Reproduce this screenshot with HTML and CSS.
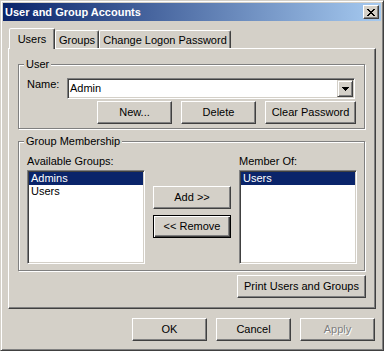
FILE: index.html
```html
<!DOCTYPE html>
<html>
<head>
<meta charset="utf-8">
<link rel="stylesheet" href="styles.css">
</head>
<body>
<div class="window">
  <div class="titlebar">
    <span class="title">User and Group Accounts</span>
    <span class="close">
      <svg width="8" height="7" viewBox="0 0 8 7" shape-rendering="crispEdges">
        <path d="M0 0h2v1h-2z M6 0h2v1h-2z M1 1h2v1h-2z M5 1h2v1h-2z M2 2h4v1h-4z M3 3h2v1h-2z M2 4h4v1h-4z M1 5h2v1h-2z M5 5h2v1h-2z M0 6h2v1h-2z M6 6h2v1h-2z" fill="#000"/>
      </svg>
    </span>
  </div>
  <div class="tabs">
    <div class="tab tab-users active">Users</div>
    <div class="tab tab-groups">Groups</div>
    <div class="tab tab-pass">Change Logon Password</div>
  </div>
  <div class="panel">
    <div class="group user-group">
      <span class="legend">User</span>
      <div class="name-row">
        <span class="name-label">Name:</span>
        <div class="combo">
          <span class="combo-text">Admin</span>
          <span class="drop">
            <svg width="7" height="4" viewBox="0 0 7 4" shape-rendering="crispEdges"><path d="M0 0h7v1h-7z M1 1h5v1h-5z M2 2h3v1h-3z M3 3h1v1h-1z" fill="#000"/></svg>
          </span>
        </div>
      </div>
      <div class="user-buttons">
        <button class="btn">New...</button>
        <button class="btn">Delete</button>
        <button class="btn btn-wide">Clear Password</button>
      </div>
    </div>
    <div class="group members">
      <span class="legend">Group Membership</span>
      <div class="members-grid">
        <span class="col-label avail-label">Available Groups:</span>
        <span class="col-label member-label">Member Of:</span>
        <div class="list avail-list">
          <div class="item sel">Admins</div>
          <div class="item">Users</div>
        </div>
        <div class="move-buttons">
          <button class="btn btn-move">Add &gt;&gt;</button>
          <button class="btn btn-move btn-default">&lt;&lt; Remove</button>
        </div>
        <div class="list member-list">
          <div class="item sel">Users</div>
        </div>
      </div>
    </div>
    <div class="print-row">
      <button class="btn btn-print">Print Users and Groups</button>
    </div>
  </div>
  <div class="footer">
    <button class="btn">OK</button>
    <button class="btn">Cancel</button>
    <button class="btn btn-disabled" disabled>Apply</button>
  </div>
</div>
</body>
</html>
```
FILE: styles.css
```css
* { box-sizing: border-box; }
html, body { margin: 0; padding: 0; }
body {
  background: #d4d0c8;
  font-family: "Liberation Sans", Arial, sans-serif;
  font-size: 11px;
  line-height: 13px;
  color: #000;
}
.window {
  width: 384px;
  height: 351px;
  border: 1px solid;
  border-color: #d4d0c8 #404040 #404040 #d4d0c8;
  box-shadow: inset 1px 1px #fff, inset -1px -1px #808080;
  padding: 2px;
  display: flex;
  flex-direction: column;
}
.titlebar {
  height: 18px;
  flex: none;
  background: linear-gradient(to right, #0a246a, #a6caf0);
  display: flex;
  align-items: center;
  justify-content: space-between;
  padding: 0 2px;
}
.title {
  color: #fff;
  font-weight: bold;
  line-height: 18px;
}
.close {
  width: 16px;
  height: 14px;
  background: #d4d0c8;
  border: 1px solid;
  border-color: #fff #404040 #404040 #fff;
  box-shadow: inset -1px -1px #808080;
  display: flex;
  align-items: center;
  justify-content: center;
}
.close svg { display: block; }

.tabs {
  display: flex;
  align-items: flex-end;
  height: 20px;
  flex: none;
  margin-top: 7px;
  padding-left: 6px;
}
.tab {
  height: 18px;
  border: 1px solid;
  border-bottom: none;
  border-color: #fff #404040 transparent #fff;
  box-shadow: inset -1px 0 #808080;
  border-radius: 2px 2px 0 0;
  padding-top: 3px;
  text-align: center;
  white-space: nowrap;
}
.tab.active {
  height: 21px;
  margin-bottom: -1px;
  padding-top: 4px;
  position: relative;
  z-index: 1;
  background: #d4d0c8;
}
.tab-users { width: 46px; }
.tab-groups { width: 44px; }
.tab-pass { width: 132px; }

.panel {
  margin: 0 5px;
  height: 261px;
  flex: none;
  border: 1px solid;
  border-color: #fff #404040 #404040 #fff;
  box-shadow: inset -1px -1px #808080;
  padding: 15px 9px 0 9px;
}
.group {
  position: relative;
  width: 347px;
  border: 1px solid #808080;
  box-shadow: 1px 1px #fff, inset 1px 1px #fff;
}
.legend {
  position: absolute;
  top: -7px;
  left: 5px;
  padding: 0 2px;
  background: #d4d0c8;
  white-space: nowrap;
}
.user-group {
  height: 65px;
  padding: 13px 0 0 8px;
}
.name-row {
  display: flex;
  align-items: flex-start;
}
.name-label { width: 40px; }
.combo {
  width: 288px;
  height: 21px;
  background: #fff;
  border: 1px solid;
  border-color: #808080 #fff #fff #808080;
  box-shadow: inset 1px 1px #404040, inset -1px -1px #d4d0c8;
  padding: 1px;
  display: flex;
  align-items: center;
}
.combo-text {
  flex: 1;
  padding-left: 1px;
}
.drop {
  width: 16px;
  height: 17px;
  background: #d4d0c8;
  border: 1px solid;
  border-color: #d4d0c8 #404040 #404040 #d4d0c8;
  box-shadow: inset 1px 1px #fff, inset -1px -1px #808080;
  display: flex;
  align-items: center;
  justify-content: center;
}
.drop svg { display: block; }
.user-buttons {
  display: flex;
  gap: 9px;
  margin-top: 2px;
  padding-left: 70px;
}

.btn {
  -webkit-appearance: none;
  appearance: none;
  font: inherit;
  color: #000;
  width: 75px;
  height: 23px;
  margin: 0;
  padding: 0;
  background: #d4d0c8;
  border: 1px solid;
  border-color: #fff #404040 #404040 #fff;
  box-shadow: inset -1px -1px #808080;
  white-space: nowrap;
}
.btn-wide { width: 91px; }
.btn-move { width: 78px; }
.btn-default {
  border-color: #000;
  box-shadow: inset 1px 1px #fff, inset -1px -1px #404040, inset -2px -2px #808080;
}
.btn-print { width: 129px; }
.btn-disabled {
  color: #808080;
  text-shadow: 1px 1px #fff;
}

.members {
  margin-top: 12px;
  height: 130px;
  padding: 13px 0 0 8px;
}
.members-grid {
  display: grid;
  grid-template-columns: 118px 78px 118px;
  grid-template-rows: 13px 94px;
  column-gap: 8px;
  row-gap: 2px;
}
.avail-label { grid-column: 1; grid-row: 1; white-space: nowrap; }
.member-label { grid-column: 3; grid-row: 1; white-space: nowrap; }
.avail-list { grid-column: 1; grid-row: 2; }
.move-buttons { grid-column: 2; grid-row: 2; }
.member-list { grid-column: 3; grid-row: 2; }
.list {
  background: #fff;
  border: 1px solid;
  border-color: #808080 #fff #fff #808080;
  box-shadow: inset 1px 1px #404040, inset -1px -1px #d4d0c8;
  padding: 1px;
}
.item {
  height: 13px;
  padding-left: 2px;
  white-space: nowrap;
}
.item.sel {
  background: #0a246a;
  color: #fff;
}
.move-buttons {
  display: flex;
  flex-direction: column;
  gap: 6px;
  padding-top: 16px;
}

.print-row {
  display: flex;
  justify-content: flex-end;
  margin-top: 4px;
}
.footer {
  display: flex;
  justify-content: flex-end;
  gap: 9px;
  margin-top: 9px;
  padding-right: 6px;
}
```
